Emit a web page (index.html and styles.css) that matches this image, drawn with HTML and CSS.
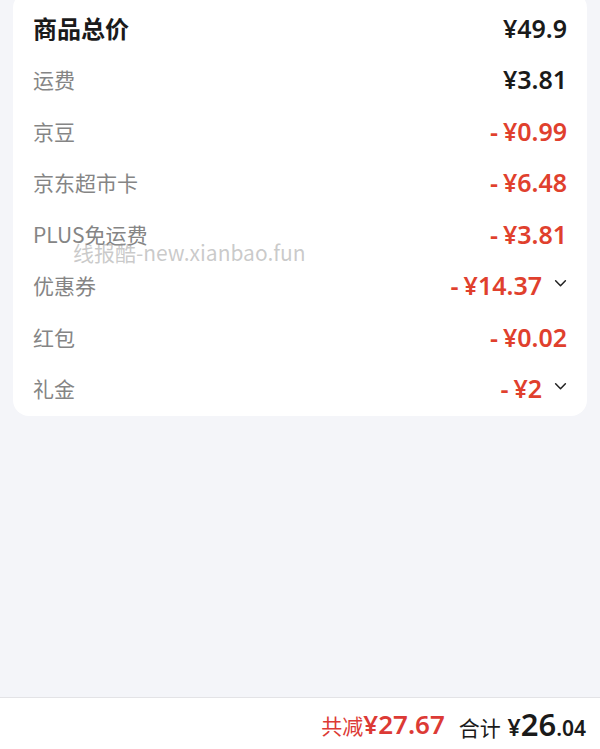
FILE: index.html
```html
<!DOCTYPE html>
<html>
<head>
    <meta charset="UTF-8">
    <title>订单金额明细</title>
    <!-- Styling for the price summary -->
    <link rel="stylesheet" href="styles.css">
</head>
<body>
<div class="page">
    <div class="price-card">
        <div class="price-row price-row-title">
            <span class="price-label">商品总价</span>
            <span class="price-value">¥49.9</span>
        </div>
        <div class="price-row">
            <span class="price-label">运费</span>
            <span class="price-value">¥3.81</span>
        </div>
        <div class="price-row">
            <span class="price-label">京豆</span>
            <span class="price-value minus"><i>-</i>¥0.99</span>
        </div>
        <div class="price-row">
            <span class="price-label">京东超市卡</span>
            <span class="price-value minus"><i>-</i>¥6.48</span>
        </div>
        <div class="price-row">
            <span class="price-label">PLUS免运费</span>
            <span class="price-value minus"><i>-</i>¥3.81</span>
            <span class="watermark">线报酷-new.xianbao.fun</span>
        </div>
        <div class="price-row">
            <span class="price-label">优惠券</span>
            <span class="price-value minus"><i>-</i>¥14.37<svg class="chevron" viewBox="0 0 12 8"><path d="M1.5 1.5 L6 6 L10.5 1.5" fill="none" stroke="#222" stroke-width="1.4" stroke-linecap="round" stroke-linejoin="round"/></svg></span>
        </div>
        <div class="price-row">
            <span class="price-label">红包</span>
            <span class="price-value minus"><i>-</i>¥0.02</span>
        </div>
        <div class="price-row">
            <span class="price-label">礼金</span>
            <span class="price-value minus"><i>-</i>¥2<svg class="chevron" viewBox="0 0 12 8"><path d="M1.5 1.5 L6 6 L10.5 1.5" fill="none" stroke="#222" stroke-width="1.4" stroke-linecap="round" stroke-linejoin="round"/></svg></span>
        </div>
    </div>

    <!-- Bottom total bar -->
    <div class="total-bar">
        <span class="total-discount">共减<b>¥27.67</b></span>
        <span class="total-sum">合计 <span class="yen">¥</span><span class="big">26</span><span class="small">.04</span></span>
    </div>
</div>
</body>
</html>
```

FILE: styles.css
```css
/* Page */
body {
    margin: 0;
    padding: 0;
    background-color: #f4f5f9;
    font-family: "Noto Sans CJK SC", "Noto Sans", sans-serif;
}

.page {
    display: flex;
    flex-direction: column;
    min-height: 100vh;
}

/* Price card */
.price-card {
    margin: -8px 13px 0 13px;
    padding: 10px 20px 2px 20px;
    background-color: #fff;
    border-radius: 16px;
}

.price-row {
    position: relative;
    display: flex;
    align-items: center;
    justify-content: space-between;
    height: 51.5px;
}

.price-label {
    font-size: 21px;
    color: #858585;
}

.price-row-title .price-label {
    font-size: 24px;
    font-weight: bold;
    color: #1a1a1a;
}

.price-value {
    display: flex;
    align-items: center;
    font-family: "Noto Sans", sans-serif;
    font-size: 25px;
    font-weight: 600;
    color: #1a1a1a;
}

.price-value.minus {
    color: #e0402d;
}

.price-value i {
    font-style: normal;
    margin-right: 5px;
}

.chevron {
    width: 13px;
    height: 9px;
    margin-left: 12px;
    margin-top: -4px;
}

/* Watermark over the PLUS row */
.watermark {
    position: absolute;
    left: 40px;
    top: 29px;
    font-family: "Noto Sans CJK SC", "Noto Sans", sans-serif;
    font-size: 21px;
    color: rgba(150, 150, 150, 0.5);
    pointer-events: none;
}

/* Bottom total bar */
.total-bar {
    margin-top: auto;
    height: 51px;
    display: flex;
    align-items: center;
    justify-content: flex-end;
    gap: 14px;
    padding: 0 14px 0 0;
    background-color: #fff;
    border-top: 1px solid #e3e3e6;
}

.total-discount {
    font-size: 21px;
    color: #dc3a35;
}

.total-discount b {
    font-family: "Noto Sans", sans-serif;
    font-size: 26px;
    font-weight: 600;
}

.total-sum {
    font-size: 21px;
    color: #1a1a1a;
}

.total-sum .yen {
    font-family: "Noto Sans", sans-serif;
    font-weight: 600;
    font-size: 23px;
    margin-left: 2px;
}

.total-sum .big {
    font-family: "Noto Sans", sans-serif;
    font-weight: 600;
    font-size: 31px;
}

.total-sum .small {
    font-family: "Noto Sans", sans-serif;
    font-weight: 600;
    font-size: 21px;
}
```
